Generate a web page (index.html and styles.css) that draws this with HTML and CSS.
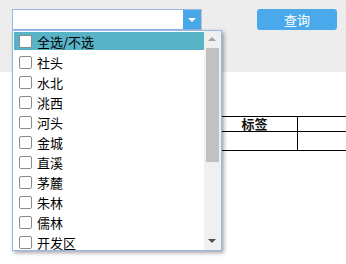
FILE: index.html
```html
<!DOCTYPE html>
<html lang="zh-CN">
<head>
    <meta charset="UTF-8">
    <meta name="viewport" content="width=device-width, initial-scale=1.0">
    <title>查询</title>
    <link rel="stylesheet" href="styles.css">
</head>
<body>

    <!-- Toolbar -->
    <div class="toolbar">
        <div class="combo">
            <input type="text" class="combo-text">
            <span class="combo-arrow"></span>
        </div>
        <button class="btn-query">查询</button>
    </div>

    <!-- Result table -->
    <table class="grid">
        <colgroup>
            <col class="col-a">
            <col class="col-b">
            <col class="col-c">
        </colgroup>
        <tr>
            <th></th>
            <th>标签</th>
            <th></th>
        </tr>
        <tr>
            <td></td>
            <td></td>
            <td></td>
        </tr>
    </table>

    <!-- Dropdown panel -->
    <div class="combo-panel">
        <div class="combo-list">
            <label class="item item-all"><input type="checkbox"><span>全选/不选</span></label>
            <label class="item"><input type="checkbox"><span>社头</span></label>
            <label class="item"><input type="checkbox"><span>水北</span></label>
            <label class="item"><input type="checkbox"><span>洮西</span></label>
            <label class="item"><input type="checkbox"><span>河头</span></label>
            <label class="item"><input type="checkbox"><span>金城</span></label>
            <label class="item"><input type="checkbox"><span>直溪</span></label>
            <label class="item"><input type="checkbox"><span>茅麓</span></label>
            <label class="item"><input type="checkbox"><span>朱林</span></label>
            <label class="item"><input type="checkbox"><span>儒林</span></label>
            <label class="item"><input type="checkbox"><span>开发区</span></label>
        </div>
        <div class="scrollbar">
            <div class="sb-btn sb-up"></div>
            <div class="sb-track"><div class="sb-thumb"></div></div>
            <div class="sb-btn sb-down"></div>
        </div>
    </div>

</body>
</html>
```

FILE: styles.css
```css
body {
    margin: 0;
    background-color: #ffffff;
    font-family: "Microsoft YaHei", "Noto Sans CJK SC", sans-serif;
    font-size: 13px;
    overflow: hidden;
    height: 264px;
}

.toolbar {
    height: 72px;
    background-color: #ededed;
    padding: 9px 0 0 12px;
    box-sizing: border-box;
    display: flex;
    align-items: flex-start;
}

.combo {
    display: flex;
    flex-shrink: 0;
    width: 190px;
    height: 21px;
    box-sizing: border-box;
    border: 1px solid #95b8e7;
    border-right-color: #c4c4c4;
    background-color: #fff;
}

.combo-text {
    flex: 1;
    min-width: 0;
    border: none;
    outline: none;
    padding: 0 4px;
    font: inherit;
}

.combo-arrow {
    width: 18px;
    background-color: #48a8ea;
    position: relative;
}

.combo-arrow::after {
    content: "";
    position: absolute;
    left: 5px;
    top: 8px;
    border-left: 4px solid transparent;
    border-right: 4px solid transparent;
    border-top: 4px solid #fff;
}

.btn-query {
    flex-shrink: 0;
    margin-left: 55px;
    width: 80px;
    height: 21px;
    padding: 0;
    border: none;
    border-radius: 3px;
    background-color: #49a9ea;
    color: #fff;
    font: inherit;
    line-height: 21px;
}

.grid {
    border-collapse: collapse;
    margin: 44px 0 0 123px;
    table-layout: fixed;
    width: 223px;
}

.col-a { width: 88px; }
.col-b { width: 86px; }
.col-c { width: 49px; }

.grid th,
.grid td {
    border: 1px solid #000;
    padding: 0;
}

.grid th:last-child,
.grid td:last-child {
    border-right: none;
}

.grid th {
    height: 14px;
    line-height: 14px;
    font-weight: bold;
    color: #111;
}

.grid td {
    height: 18px;
}

/* dropdown */
.combo-panel {
    position: absolute;
    left: 12px;
    top: 30px;
    width: 210px;
    height: 221px;
    box-sizing: border-box;
    border: 1px solid #95b8e7;
    background-color: #fff;
    box-shadow: 2px 2px 4px rgba(0, 0, 0, 0.35);
    display: flex;
}

.combo-list {
    flex: 1;
    overflow: hidden;
    padding: 1px 0 0 1px;
}

.item {
    display: flex;
    align-items: center;
    height: 20px;
    padding-left: 5px;
    color: #000;
}

.item-all {
    height: 18px;
    margin-bottom: 2px;
    background-color: #58b3c7;
}

.item input {
    appearance: none;
    -webkit-appearance: none;
    margin: 0 5px 0 0;
    width: 13px;
    height: 13px;
    box-sizing: border-box;
    border: 1px solid #8a8a8a;
    border-radius: 2px;
    background-color: #fff;
}

.scrollbar {
    width: 17px;
    background-color: #f0f0f0;
    display: flex;
    flex-direction: column;
}

.sb-btn {
    height: 17px;
    position: relative;
}

.sb-up::after,
.sb-down::after {
    content: "";
    position: absolute;
    left: 4px;
    top: 6px;
    border-left: 4px solid transparent;
    border-right: 4px solid transparent;
}

.sb-up::after {
    border-bottom: 4px solid #a3a3a3;
}

.sb-down::after {
    border-top: 4px solid #505050;
}

.sb-track {
    flex: 1;
    padding: 0 2px;
}

.sb-thumb {
    height: 114px;
    background-color: #c1c1c1;
}
```
